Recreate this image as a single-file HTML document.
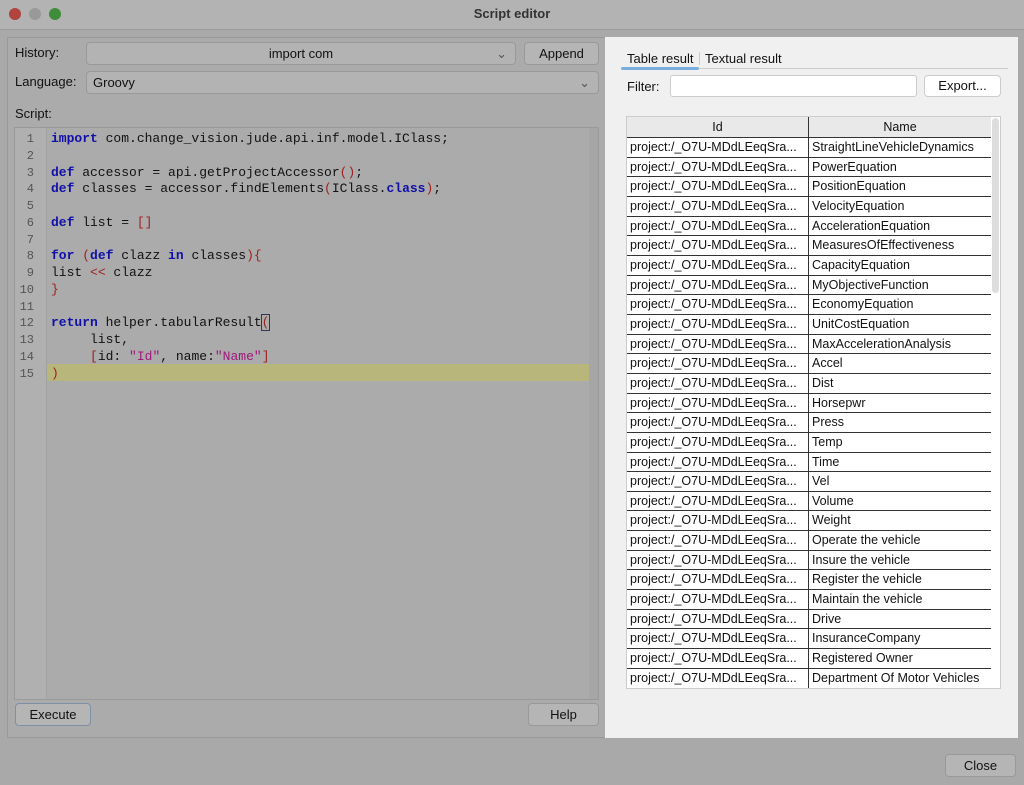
<!DOCTYPE html>
<html><head><meta charset="utf-8"><style>
*{margin:0;padding:0;box-sizing:border-box}
body{width:1024px;height:785px;overflow:hidden;background:#a9a9a9;font-family:"Liberation Sans",sans-serif;font-size:13px;color:#111;position:relative}
.a{position:absolute}
.title{left:0;top:0;width:1024px;height:30px;background:#b3b3b3;border-bottom:1px solid #9c9c9c;text-align:center;line-height:28px;font-weight:bold;font-size:13px;color:#333}
.dot{width:12px;height:12px;border-radius:50%;top:8px}
.btn{background:#b5b5b5;border:1px solid #999;border-radius:4px;text-align:center;color:#111}
.combo{background:#b3b3b3;border:1px solid #999;border-radius:4px}
.code{font-family:"Liberation Mono",monospace;font-size:13px;line-height:16.75px;white-space:pre;color:#111}
.k{color:#1010a8;font-weight:bold}.p{color:#a02020}.s{color:#a0187c}
.rows div.r{height:19.67px;border-bottom:1px solid #333;display:flex;font-size:12.5px;line-height:19px}
.r span:first-child{width:182px;padding-left:3px;border-right:1px solid #333;overflow:hidden;white-space:nowrap}
.r span:last-child{padding-left:3px;white-space:nowrap}
</style></head><body>
<div class="a title">Script editor</div>
<div class="a dot" style="left:9px;background:#b0443e"></div>
<div class="a dot" style="left:29px;background:#999"></div>
<div class="a dot" style="left:49px;background:#3f8c3a"></div>

<div class="a" style="left:7px;top:37px;width:604px;height:701px;border:1px solid #999;background:#ababab"></div>
<div class="a" style="left:15px;top:45px">History:</div>
<div class="a combo" style="left:86px;top:42px;width:430px;height:23px;text-align:center;line-height:21px">import com<span class="a" style="right:8px;top:0;color:#555">&#8964;</span></div>
<div class="a btn" style="left:524px;top:42px;width:75px;height:23px;line-height:21px">Append</div>
<div class="a" style="left:15px;top:74px">Language:</div>
<div class="a combo" style="left:86px;top:71px;width:513px;height:23px;line-height:21px;padding-left:6px">Groovy<span class="a" style="right:8px;top:0;color:#555">&#8964;</span></div>
<div class="a" style="left:15px;top:106px">Script:</div>
<div class="a" style="left:14px;top:127px;width:585px;height:573px;border:1px solid #999;background:#ababab"></div>
<div class="a" style="left:15px;top:128px;width:32px;height:571px;background:#b0b0b0;border-right:1px solid #a0a0a0"></div>
<div class="a" style="left:589px;top:128px;width:9px;height:571px;background:#a6a6a6"></div>
<div class="a" style="left:47px;top:364px;width:542px;height:17px;background:#b9b67c"></div>
<div class="a code" style="left:18px;top:131px;width:16px;text-align:right;color:#555;font-size:12px">1
2
3
4
5
6
7
8
9
10
11
12
13
14
15</div>
<div class="a code" style="left:51px;top:131px"><span class="k">import</span> com.change_vision.jude.api.inf.model.IClass;

<span class="k">def</span> accessor = api.getProjectAccessor<span class="p">()</span>;
<span class="k">def</span> classes = accessor.findElements<span class="p">(</span>IClass.<span class="k">class</span><span class="p">)</span>;

<span class="k">def</span> list = <span class="p">[]</span>

<span class="k">for</span> <span class="p">(</span><span class="k">def</span> clazz <span class="k">in</span> classes<span class="p">){</span>
list <span class="p">&lt;&lt;</span> clazz
<span class="p">}</span>

<span class="k">return</span> helper.tabularResult<span style="outline:1px solid #335;color:#a02020">(</span>
     list,
     <span class="p">[</span>id: <span class="s">"Id"</span>, name:<span class="s">"Name"</span><span class="p">]</span>
<span class="p">)</span></div>
<div class="a btn" style="left:15px;top:703px;width:76px;height:23px;line-height:21px;border-color:#7d90a8">Execute</div>
<div class="a btn" style="left:528px;top:703px;width:71px;height:23px;line-height:21px">Help</div>
<div class="a" style="left:608px;top:378px;color:#bbb;font-size:10px;line-height:4px">·<br>·<br>·</div>

<div class="a" style="left:605px;top:37px;width:413px;height:701px;background:#f0f0f0"></div>
<div class="a" style="left:627px;top:51px">Table result</div>
<div class="a" style="left:699px;top:52px;width:1px;height:13px;background:#ccc"></div>
<div class="a" style="left:705px;top:51px">Textual result</div>
<div class="a" style="left:621px;top:67px;width:78px;height:3px;background:#7aaede;border-radius:2px"></div>
<div class="a" style="left:699px;top:68px;width:309px;height:1px;background:#ccc"></div>
<div class="a" style="left:627px;top:79px">Filter:</div>
<div class="a" style="left:670px;top:75px;width:247px;height:22px;background:#fff;border:1px solid #ccc;border-radius:3px"></div>
<div class="a" style="left:924px;top:75px;width:77px;height:22px;background:#fff;border:1px solid #ccc;border-radius:4px;text-align:center;line-height:20px">Export...</div>
<div class="a" style="left:626px;top:116px;width:375px;height:573px;background:#fff;border:1px solid #ccc"></div>
<div class="a" style="left:992px;top:118px;width:7px;height:175px;background:#ddd;border-radius:4px"></div>
<div class="a" style="left:627px;top:117px;width:364px;height:21px;background:#e9e9e9;border-bottom:1px solid #333;display:flex;line-height:20px;font-size:12.5px">
<span style="width:182px;text-align:center;border-right:1px solid #333">Id</span><span style="flex:1;text-align:center">Name</span></div>
<div class="a rows" style="left:627px;top:138px;width:364px">
<div class="r"><span>project:/_O7U-MDdLEeqSra...</span><span>StraightLineVehicleDynamics</span></div>
<div class="r"><span>project:/_O7U-MDdLEeqSra...</span><span>PowerEquation</span></div>
<div class="r"><span>project:/_O7U-MDdLEeqSra...</span><span>PositionEquation</span></div>
<div class="r"><span>project:/_O7U-MDdLEeqSra...</span><span>VelocityEquation</span></div>
<div class="r"><span>project:/_O7U-MDdLEeqSra...</span><span>AccelerationEquation</span></div>
<div class="r"><span>project:/_O7U-MDdLEeqSra...</span><span>MeasuresOfEffectiveness</span></div>
<div class="r"><span>project:/_O7U-MDdLEeqSra...</span><span>CapacityEquation</span></div>
<div class="r"><span>project:/_O7U-MDdLEeqSra...</span><span>MyObjectiveFunction</span></div>
<div class="r"><span>project:/_O7U-MDdLEeqSra...</span><span>EconomyEquation</span></div>
<div class="r"><span>project:/_O7U-MDdLEeqSra...</span><span>UnitCostEquation</span></div>
<div class="r"><span>project:/_O7U-MDdLEeqSra...</span><span>MaxAccelerationAnalysis</span></div>
<div class="r"><span>project:/_O7U-MDdLEeqSra...</span><span>Accel</span></div>
<div class="r"><span>project:/_O7U-MDdLEeqSra...</span><span>Dist</span></div>
<div class="r"><span>project:/_O7U-MDdLEeqSra...</span><span>Horsepwr</span></div>
<div class="r"><span>project:/_O7U-MDdLEeqSra...</span><span>Press</span></div>
<div class="r"><span>project:/_O7U-MDdLEeqSra...</span><span>Temp</span></div>
<div class="r"><span>project:/_O7U-MDdLEeqSra...</span><span>Time</span></div>
<div class="r"><span>project:/_O7U-MDdLEeqSra...</span><span>Vel</span></div>
<div class="r"><span>project:/_O7U-MDdLEeqSra...</span><span>Volume</span></div>
<div class="r"><span>project:/_O7U-MDdLEeqSra...</span><span>Weight</span></div>
<div class="r"><span>project:/_O7U-MDdLEeqSra...</span><span>Operate the vehicle</span></div>
<div class="r"><span>project:/_O7U-MDdLEeqSra...</span><span>Insure the vehicle</span></div>
<div class="r"><span>project:/_O7U-MDdLEeqSra...</span><span>Register the vehicle</span></div>
<div class="r"><span>project:/_O7U-MDdLEeqSra...</span><span>Maintain the vehicle</span></div>
<div class="r"><span>project:/_O7U-MDdLEeqSra...</span><span>Drive</span></div>
<div class="r"><span>project:/_O7U-MDdLEeqSra...</span><span>InsuranceCompany</span></div>
<div class="r"><span>project:/_O7U-MDdLEeqSra...</span><span>Registered Owner</span></div>
<div class="r" style="border-bottom:none"><span>project:/_O7U-MDdLEeqSra...</span><span>Department Of Motor Vehicles</span></div>
</div>
<div class="a btn" style="left:945px;top:754px;width:71px;height:23px;line-height:21px">Close</div>
</body></html>
